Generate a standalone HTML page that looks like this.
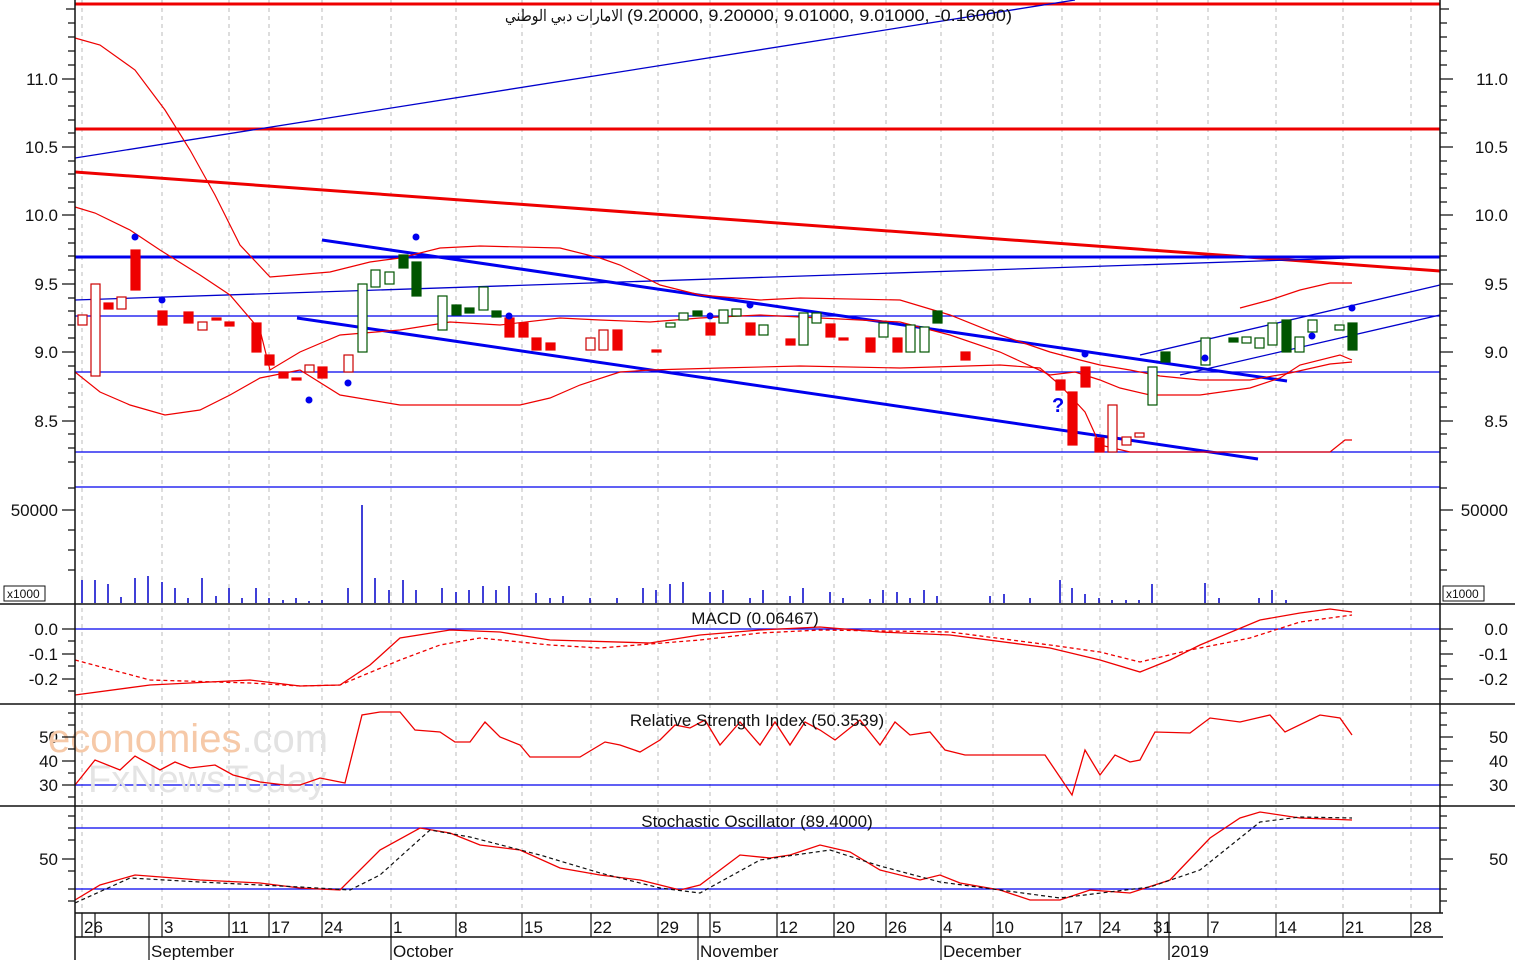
<!DOCTYPE html>
<html><head><meta charset="utf-8"><style>
html,body{margin:0;padding:0;background:#fff;width:1515px;height:960px;overflow:hidden}
svg{display:block}
text{font-family:"Liberation Sans","Noto Sans CJK SC",sans-serif;font-size:17px;fill:#111}
</style></head><body>
<svg width="1515" height="960" viewBox="0 0 1515 960" xmlns="http://www.w3.org/2000/svg">
<rect width="1515" height="960" fill="#fff"/>
<g stroke="#bbb" stroke-width="1" stroke-dasharray="4,4">
<path d="M82 0V913M162 0V913M229 0V913M269 0V913M322 0V913M391 0V913M456 0V913M522 0V913M591 0V913M658 0V913M710 0V913M777 0V913M834 0V913M886 0V913M941 0V913M993 0V913M1062 0V913M1100 0V913M1157 0V913M1208 0V913M1276 0V913M1343 0V913M1411 0V913"/>
</g>
<g fill="none">
<path d="M75 4H1440M75 129H1440" stroke="#ee0000" stroke-width="3"/>
<path d="M75 172L1440 271" stroke="#ee0000" stroke-width="3"/>
<path d="M75 257H1440" stroke="#0000ee" stroke-width="3"/>
<path d="M75 316H1440M75 372H1440M75 452H1440M75 487H1440" stroke="#0000ee" stroke-width="1.3"/>
<path d="M75 158L1075 0" stroke="#0000cc" stroke-width="1.3"/>
<path d="M75 300L1350 258" stroke="#0000cc" stroke-width="1.3"/>
<path d="M322 240L1287 381M297 318L1258 459" stroke="#0000ee" stroke-width="3"/>
<path d="M1140 355L1440 285M1180 375L1440 315" stroke="#0000cc" stroke-width="1.3"/>
<polyline stroke="#ee0000" stroke-width="1.2" points="75,38 100,45 135,70 165,110 190,150 215,195 240,245 270,277 330,272 370,262 400,258 440,248 480,246 560,248 600,258 620,265 660,285 700,295 760,300 800,298 900,300 950,315 1000,335 1050,352 1080,360 1100,365 1130,370 1160,376 1200,380 1250,380 1290,373 1330,364 1352,362"/>
<polyline stroke="#ee0000" stroke-width="1.2" points="75,207 95,213 130,230 160,250 200,275 230,295 260,330 270,370 300,352 340,335 400,330 450,322 500,325 560,318 600,320 650,322 700,318 760,315 820,318 900,322 950,335 1000,352 1050,375 1075,372 1100,380 1120,388 1150,395 1200,395 1250,388 1280,378 1300,365 1340,355 1352,360"/>
<polyline stroke="#ee0000" stroke-width="1.2" points="75,372 100,392 130,405 165,415 200,410 230,395 260,378 300,370 340,395 400,405 450,405 520,405 550,398 580,385 620,372 650,370 720,368 800,366 900,368 1000,365 1040,368 1060,385 1085,412 1100,445 1130,452 1200,452 1280,452 1330,452 1345,440 1352,440"/>
<polyline stroke="#ee0000" stroke-width="1.2" points="1240,308 1270,300 1300,290 1330,283 1352,283"/>
</g>
<g stroke-width="1.2">
<g fill="#fff" stroke="#cc0000">
<rect x="78" y="315" width="9" height="10"/><rect x="91" y="284" width="9" height="92"/><rect x="117" y="297" width="9" height="12"/><rect x="198" y="322" width="9" height="8"/><rect x="305" y="365" width="9" height="7"/><rect x="344" y="355" width="9" height="17"/><rect x="586" y="338" width="9" height="12"/><rect x="599" y="330" width="9" height="20"/><rect x="1108" y="405" width="9" height="47"/><rect x="1122" y="437" width="9" height="8"/><rect x="1135" y="433" width="9" height="4"/>
</g>
<g fill="#ee0000" stroke="#ee0000">
<rect x="104" y="303" width="9" height="6"/><rect x="131" y="250" width="9" height="40"/><rect x="158" y="311" width="9" height="14"/><rect x="184" y="312" width="9" height="11"/><rect x="212" y="318" width="9" height="2"/><rect x="225" y="322" width="9" height="4"/><rect x="252" y="323" width="9" height="29"/><rect x="265" y="355" width="9" height="10"/><rect x="279" y="372" width="9" height="6"/><rect x="292" y="378" width="9" height="2"/><rect x="318" y="367" width="9" height="11"/><rect x="505" y="318" width="9" height="19"/><rect x="519" y="323" width="9" height="14"/><rect x="532" y="338" width="9" height="12"/><rect x="546" y="343" width="9" height="7"/><rect x="613" y="330" width="9" height="20"/><rect x="652" y="350" width="9" height="2"/><rect x="706" y="323" width="9" height="12"/><rect x="746" y="323" width="9" height="12"/><rect x="786" y="339" width="9" height="6"/><rect x="826" y="324" width="9" height="13"/><rect x="839" y="338" width="9" height="2"/><rect x="866" y="338" width="9" height="14"/><rect x="893" y="338" width="9" height="14"/><rect x="961" y="352" width="9" height="8"/><rect x="1056" y="380" width="9" height="10"/><rect x="1068" y="392" width="9" height="53"/><rect x="1081" y="367" width="9" height="20"/><rect x="1095" y="438" width="9" height="14"/>
</g>
<g fill="#fff" stroke="#005500">
<rect x="358" y="284" width="9" height="68"/><rect x="371" y="270" width="9" height="17"/><rect x="385" y="272" width="9" height="12"/><rect x="438" y="296" width="9" height="34"/><rect x="479" y="287" width="9" height="23"/><rect x="666" y="323" width="9" height="4"/><rect x="679" y="313" width="9" height="7"/><rect x="719" y="310" width="9" height="13"/><rect x="732" y="309" width="9" height="7"/><rect x="759" y="325" width="9" height="10"/><rect x="799" y="313" width="9" height="32"/><rect x="812" y="313" width="9" height="10"/><rect x="879" y="323" width="9" height="14"/><rect x="906" y="325" width="9" height="27"/><rect x="920" y="327" width="9" height="25"/><rect x="1148" y="367" width="9" height="38"/><rect x="1201" y="338" width="9" height="27"/><rect x="1242" y="337" width="9" height="6"/><rect x="1255" y="338" width="9" height="10"/><rect x="1268" y="323" width="9" height="22"/><rect x="1295" y="337" width="9" height="15"/><rect x="1308" y="320" width="9" height="12"/><rect x="1335" y="325" width="9" height="5"/>
</g>
<g fill="#005500" stroke="#005500">
<rect x="399" y="255" width="9" height="13"/><rect x="412" y="262" width="9" height="34"/><rect x="452" y="305" width="9" height="10"/><rect x="465" y="308" width="9" height="5"/><rect x="492" y="311" width="9" height="6"/><rect x="693" y="311" width="9" height="5"/><rect x="933" y="311" width="9" height="12"/><rect x="1161" y="352" width="9" height="10"/><rect x="1229" y="338" width="9" height="4"/><rect x="1282" y="320" width="9" height="32"/><rect x="1348" y="323" width="9" height="27"/>
</g>
</g>
<g fill="#0000ee">
<circle cx="135" cy="237" r="3.5"/><circle cx="162" cy="300" r="3.5"/><circle cx="309" cy="400" r="3.5"/><circle cx="348" cy="383" r="3.5"/><circle cx="416" cy="237" r="3.5"/><circle cx="509" cy="316" r="3.5"/><circle cx="710" cy="316" r="3.5"/><circle cx="750" cy="305" r="3.5"/><circle cx="1085" cy="354" r="3.5"/><circle cx="1205" cy="358" r="3.5"/><circle cx="1312" cy="336" r="3.5"/><circle cx="1352" cy="308" r="3.5"/>
</g>
<text x="1052" y="412" style="font-size:20px;font-weight:bold;fill:#0000ee">?</text>
<text x="505" y="21" textLength="118" lengthAdjust="spacingAndGlyphs" style="font-size:16px">الامارات دبي الوطني</text>
<text x="627" y="21" textLength="385" lengthAdjust="spacingAndGlyphs" style="font-size:17px">(9.20000, 9.20000, 9.01000, 9.01000, -0.16000)</text>
<g stroke="#0000cc" stroke-width="1.5">
<path d="M82 603V580M95 603V580M108 603V584M121 603V597M135 603V578M148 603V576M162 603V582M175 603V588M188 603V598M202 603V578M216 603V596M229 603V588M242 603V598M256 603V588M269 603V598M283 603V600M296 603V598M309 603V601M322 603V600M348 603V588M362 603V505M375 603V578M389 603V590M403 603V580M416 603V590M442 603V588M456 603V592M469 603V590M483 603V586M496 603V590M509 603V586M536 603V593M550 603V598M563 603V596M590 603V598M617 603V598M643 603V588M656 603V590M670 603V584M683 603V582M710 603V592M723 603V590M750 603V598M763 603V590M790 603V596M803 603V588M830 603V592M843 603V598M870 603V599M883 603V590M897 603V592M910 603V598M924 603V590M937 603V596M990 603V596M1004 603V594M1030 603V598M1060 603V580M1072 603V588M1085 603V594M1099 603V598M1112 603V600M1126 603V600M1139 603V600M1152 603V584M1205 603V583M1219 603V598M1259 603V598M1272 603V590M1286 603V600"/>
</g>
<path d="M75 629H1440" stroke="#0000ee" stroke-width="1.3"/>
<polyline fill="none" stroke="#ee0000" stroke-width="1.3" points="75,695 150,685 250,680 300,686 340,685 370,665 400,638 450,630 500,632 550,640 650,643 700,635 760,630 820,627 880,632 950,635 1050,648 1100,660 1140,672 1170,660 1200,645 1260,620 1300,613 1330,609 1352,612"/>
<polyline fill="none" stroke="#ee0000" stroke-width="1.3" stroke-dasharray="4,3" points="75,660 150,680 250,683 300,686 340,685 400,660 440,645 480,638 550,645 600,648 700,640 760,633 820,630 950,632 1050,645 1100,652 1140,662 1190,650 1250,638 1300,622 1352,615"/>
<text x="755" y="624" text-anchor="middle">MACD (0.06467)</text>
<path d="M75 785H1440" stroke="#0000ee" stroke-width="1.3"/>
<text x="58" y="743" text-anchor="end">50</text>
<text x="48" y="752" style="font-size:40px;fill:#f6c9a8">economies<tspan style="fill:#e2e2e2">.com</tspan></text>
<text x="88" y="792" style="font-size:38px;fill:#e4e4e4">FxNewsToday</text>
<polyline fill="none" stroke="#ee0000" stroke-width="1.3" points="75,785 95,760 120,770 135,756 160,770 175,762 190,768 215,765 233,775 260,782 285,785 300,785 320,778 345,783 362,715 380,712 400,712 415,730 440,732 455,742 470,742 485,722 500,737 520,745 530,757 580,757 605,742 620,745 640,752 660,740 675,725 690,728 705,720 720,745 740,722 760,745 775,722 790,745 805,722 820,730 835,740 860,720 880,745 895,722 910,735 930,732 945,750 965,755 1045,755 1072,795 1085,750 1100,775 1115,755 1130,762 1140,760 1155,732 1190,733 1210,718 1240,722 1270,715 1285,732 1320,715 1340,718 1352,735"/>
<text x="757" y="726" text-anchor="middle">Relative Strength Index (50.3539)</text>
<path d="M75 828H1440M75 889H1440" stroke="#0000ee" stroke-width="1.3"/>
<polyline fill="none" stroke="#ee0000" stroke-width="1.3" points="75,900 100,885 135,875 200,880 260,883 300,888 340,890 380,850 420,828 450,833 480,845 520,850 560,868 600,875 640,880 680,890 700,885 740,855 770,858 790,855 820,845 850,852 880,870 920,880 940,875 960,883 1000,890 1030,900 1060,900 1090,890 1130,893 1170,880 1210,838 1240,818 1260,812 1300,818 1352,820"/>
<polyline fill="none" stroke="#111" stroke-width="1.2" stroke-dasharray="4,3" points="75,903 130,878 200,882 300,887 350,890 380,875 430,830 470,837 540,855 600,873 660,888 700,893 760,860 830,850 880,866 940,882 1000,890 1060,898 1150,887 1200,870 1260,822 1300,817 1352,818"/>
<text x="757" y="827" text-anchor="middle">Stochastic Oscillator (89.4000)</text>
<g stroke="#111" stroke-width="1.5" fill="none">
<path d="M75 0V960M1440 0V913M75 604H1440M75 704H1440M75 806H1440M75 913H1443M75 937H1443"/>
<path d="M0 604H75M1440 604H1515M0 704H75M1440 704H1515M0 806H75M1440 806H1515"/>
</g>
<g stroke="#111" stroke-width="1.2">
<path d="M66 9H75M68 23H75M68 37H75M68 51H75M68 65H75M62 79H75M68 92H75M68 106H75M68 120H75M68 133H75M62 147H75M68 161H75M68 174H75M68 188H75M68 202H75M62 215H75M68 229H75M68 243H75M68 256H75M68 270H75M62 284H75M68 298H75M68 311H75M68 325H75M68 338H75M62 352H75M68 366H75M68 379H75M68 393H75M68 407H75M62 421H75M68 434H75M68 448H75M68 462H75M68 488H75M62 510H75M68 530H75M68 550H75M68 570H75M62 629H75M68 641H75M62 654H75M68 666H75M62 679H75M68 691H75M68 713H75M68 725H75M62 737H75M68 749H75M62 761H75M68 773H75M62 785H75M68 797H75M68 816H75M68 828H75M68 840H75M62 859H75M68 871H75M68 889H75M68 901H75"/>
<path d="M1440 9H1449M1440 23H1447M1440 37H1447M1440 51H1447M1440 65H1447M1440 79H1453M1440 92H1447M1440 106H1447M1440 120H1447M1440 133H1447M1440 147H1453M1440 161H1447M1440 174H1447M1440 188H1447M1440 202H1447M1440 215H1453M1440 229H1447M1440 243H1447M1440 256H1447M1440 270H1447M1440 284H1453M1440 298H1447M1440 311H1447M1440 325H1447M1440 338H1447M1440 352H1453M1440 366H1447M1440 379H1447M1440 393H1447M1440 407H1447M1440 421H1453M1440 434H1447M1440 448H1447M1440 462H1447M1440 488H1447M1440 510H1453M1440 530H1447M1440 550H1447M1440 570H1447M1440 629H1453M1440 641H1447M1440 654H1453M1440 666H1447M1440 679H1453M1440 691H1447M1440 713H1447M1440 725H1447M1440 737H1453M1440 749H1447M1440 761H1453M1440 773H1447M1440 785H1453M1440 797H1447M1440 816H1447M1440 828H1447M1440 840H1447M1440 859H1453M1440 871H1447M1440 889H1447M1440 901H1447"/>
</g>
<g text-anchor="end">
<text x="58" y="85">11.0</text><text x="58" y="153">10.5</text><text x="58" y="221">10.0</text><text x="58" y="290">9.5</text><text x="58" y="358">9.0</text><text x="58" y="427">8.5</text><text x="58" y="516">50000</text>
<text x="58" y="635">0.0</text><text x="58" y="660">-0.1</text><text x="58" y="685">-0.2</text>
<text x="58" y="767">40</text><text x="58" y="791">30</text><text x="58" y="865">50</text>
<text x="1508" y="85">11.0</text><text x="1508" y="153">10.5</text><text x="1508" y="221">10.0</text><text x="1508" y="290">9.5</text><text x="1508" y="358">9.0</text><text x="1508" y="427">8.5</text><text x="1508" y="516">50000</text>
<text x="1508" y="635">0.0</text><text x="1508" y="660">-0.1</text><text x="1508" y="685">-0.2</text>
<text x="1508" y="743">50</text><text x="1508" y="767">40</text><text x="1508" y="791">30</text><text x="1508" y="865">50</text>
</g>
<rect x="4" y="586" width="41" height="15" fill="#fff" stroke="#111"/><text x="7" y="598" style="font-size:12px">x1000</text>
<rect x="1443" y="586" width="41" height="15" fill="#fff" stroke="#111"/><text x="1446" y="598" style="font-size:12px">x1000</text>
<g stroke="#111" stroke-width="1.2">
<path d="M82 913V937M95 913V937M162 913V937M229 913V937M269 913V937M322 913V937M391 913V937M456 913V937M522 913V937M591 913V937M658 913V937M710 913V937M777 913V937M834 913V937M886 913V937M941 913V937M993 913V937M1062 913V937M1100 913V937M1157 913V937M1208 913V937M1276 913V937M1343 913V937M1411 913V937"/>
<path d="M149 913V960M391 913V960M698 913V960M941 913V960M1169 913V960"/>
</g>
<g style="font-size:18px">
<text x="84" y="933">26</text><text x="164" y="933">3</text><text x="231" y="933">11</text><text x="271" y="933">17</text><text x="324" y="933">24</text><text x="393" y="933">1</text><text x="458" y="933">8</text><text x="524" y="933">15</text><text x="593" y="933">22</text><text x="660" y="933">29</text><text x="712" y="933">5</text><text x="779" y="933">12</text><text x="836" y="933">20</text><text x="888" y="933">26</text><text x="943" y="933">4</text><text x="995" y="933">10</text><text x="1064" y="933">17</text><text x="1102" y="933">24</text><text x="1153" y="933">31</text><text x="1210" y="933">7</text><text x="1278" y="933">14</text><text x="1345" y="933">21</text><text x="1413" y="933">28</text>
<text x="151" y="957">September</text><text x="393" y="957">October</text><text x="700" y="957">November</text><text x="943" y="957">December</text><text x="1171" y="957">2019</text>
</g>
</svg>
</body></html>
